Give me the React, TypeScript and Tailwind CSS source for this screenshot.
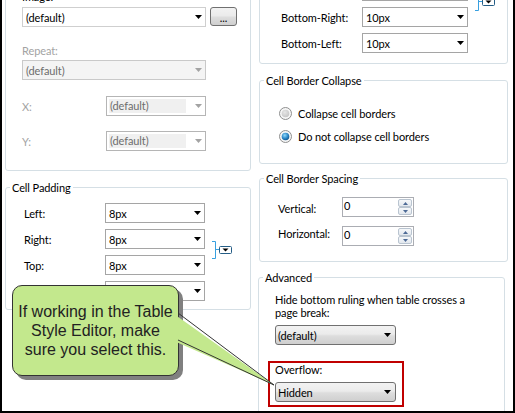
import React from 'react';

// table style editor panel with a callout pointing at the Overflow combo

function Arrow({ disabled }: { disabled?: boolean }) {
  return (
    <svg width="7" height="4" viewBox="0 0 7 4" className="shrink-0">
      <path d="M0 0h7L3.5 4z" fill={disabled ? '#a3a3a3' : '#000'} />
    </svg>
  );
}

function Combo({ value, className }: { value: string; className: string }) {
  return (
    <div className={`flex h-[20px] items-center justify-between border bg-white pl-[3px] pr-[3px] ${className}`}>
      <span>{value}</span>
      <Arrow />
    </div>
  );
}

function DisabledCombo({ value, filled }: { value: string; filled?: boolean }) {
  if (filled) {
    return (
      <div className="flex h-[20px] w-[184px] items-center justify-between border border-[#c9c9c9] bg-[#f4f4f4] pl-[3px] pr-[3px] text-[#6d6d6d]">
        <span>{value}</span>
        <Arrow disabled />
      </div>
    );
  }
  return (
    <div className="flex h-[20px] w-[100px] items-center gap-[9px] border border-[#b5b5b5] bg-white p-[2px] pr-[3px] text-[#6d6d6d]">
      <span className="h-full flex-1 bg-[#f0f0f0] pl-[1px] leading-[14px]">{value}</span>
      <Arrow disabled />
    </div>
  );
}

function ButtonCombo({ value }: { value: string }) {
  return (
    <div className="flex h-[20px] w-[121px] items-center justify-between rounded-[3px] border border-[#707070] bg-[linear-gradient(#f2f2f2,#ebebeb_45%,#dddddd_55%,#cfcfcf)] pl-[2px] pr-[4px]">
      <span>{value}</span>
      <Arrow />
    </div>
  );
}

function SpinButton({ up }: { up?: boolean }) {
  return (
    <div className="flex flex-1 items-center justify-center rounded-[2px] border border-[#b9c4d0] bg-linear-to-b from-[#f6f8fa] to-[#e3e8ee]">
      <svg width="5" height="3" viewBox="0 0 5 3">
        <path d={up ? 'M0 3h5L2.5 0z' : 'M0 0h5L2.5 3z'} fill="#4d6a96" />
      </svg>
    </div>
  );
}

function Spin({ value }: { value: string }) {
  return (
    <div className="flex h-[20px] w-[72px] border border-[#abadb3] bg-white">
      <span className="flex-1 pl-[1px]">{value}</span>
      <div className="my-px mr-px flex w-[14px] flex-col">
        <SpinButton up />
        <SpinButton />
      </div>
    </div>
  );
}

function Radio({ checked }: { checked?: boolean }) {
  const id = checked ? 'radio-on' : 'radio-off';
  return (
    <svg width="13" height="13" viewBox="0 0 13 13" className="shrink-0">
      <defs>
        <radialGradient id={id} cx="0.4" cy="0.35" r="0.7">
          {checked ? (
            <>
              <stop offset="0" stopColor="#8fd8fb" />
              <stop offset="0.6" stopColor="#2a86c6" />
              <stop offset="1" stopColor="#0d4f86" />
            </>
          ) : (
            <>
              <stop offset="0" stopColor="#e6e6e6" />
              <stop offset="1" stopColor="#c4c4c4" />
            </>
          )}
        </radialGradient>
      </defs>
      <circle cx="6.5" cy="6.5" r="6" fill="#f6f6f6" stroke="#8e8f8f" />
      <circle cx="6.5" cy="6.5" r="3.8" fill={`url(#${id})`} />
    </svg>
  );
}

function LinkIcon() {
  return (
    <svg width="21" height="20" viewBox="0 0 21 20" className="shrink-0">
      <path d="M0 1.5h3.5v17H0M3.5 9.5h4" stroke="#38a0e0" fill="none" />
      <rect x="7.5" y="6.5" width="12" height="7" rx="1" fill="#fff" stroke="#245d86" />
      <path d="M10.5 8.5h6l-3 3z" fill="#000" />
    </svg>
  );
}

function Legend({ children }: { children: React.ReactNode }) {
  return <legend className="ml-[4px] px-[2px]">{children}</legend>;
}

export default function App() {
  return (
    <div className="relative h-[413px] w-[515px] overflow-hidden border-x-2 border-b-2 border-black bg-white font-['Lato','Liberation_Sans',sans-serif] text-[11px] leading-[15px] tracking-[-0.1px] text-black">
      <div className="flex gap-[8px] pl-[3px] pr-[5px]">
        {/* left column */}
        <div className="flex w-[246px] flex-col">
          <div className="-mt-[12px] rounded-[3px] border border-[#d5dfe5] pb-[19px] pl-[16px]">
            <div>Image:</div>
            <div className="mt-[3px] flex items-start gap-[4px]">
              <Combo value="(default)" className="w-[184px] border-[#cfcfcf]" />
              <div className="flex h-[19px] w-[27px] items-center justify-center rounded-[3px] border border-[#707070] bg-[linear-gradient(#f2f2f2,#ebebeb_45%,#dddddd_55%,#cfcfcf)] pt-[2px] text-[11px] leading-[11px]">
                ...
              </div>
            </div>
            <div className="mt-[16px] text-[#a3a3a3]">Repeat:</div>
            <div className="mt-[2px]">
              <DisabledCombo value="(default)" filled />
            </div>
            <div className="mt-[16px] flex items-center">
              <span className="w-[84px] text-[#a3a3a3]">X:</span>
              <DisabledCombo value="(default)" />
            </div>
            <div className="mt-[15px] flex items-center">
              <span className="w-[84px] text-[#a3a3a3]">Y:</span>
              <DisabledCombo value="(default)" />
            </div>
          </div>

          <fieldset className="mt-[9px] rounded-[3px] border border-[#d5dfe5]">
            <Legend>Cell Padding</Legend>
            <div className="grid grid-cols-[81px_100px_auto] gap-y-[6px] pb-[8px] pl-[18px] pt-[8px]">
              <span className="self-center">Left:</span>
              <Combo value="8px" className="border-[#a5a5a5]" />
              <span />
              <span className="self-center">Right:</span>
              <Combo value="8px" className="border-[#a5a5a5]" />
              <div className="row-span-2 ml-[7px] mt-[11px] self-start">
                <LinkIcon />
              </div>
              <span className="self-center">Top:</span>
              <Combo value="8px" className="border-[#a5a5a5]" />
              <span className="self-center">Bottom:</span>
              <Combo value="8px" className="border-[#a5a5a5]" />
              <span />
            </div>
          </fieldset>
        </div>

        {/* right column */}
        <div className="flex w-[249px] flex-col">
          <div className="-mt-[56px] rounded-[3px] border border-[#d5dfe5] pb-[10px] pl-[21px] pt-[10px]">
            <div className="grid grid-cols-[81px_106px_auto] gap-y-[6px]">
              <span className="self-center">Top-Left:</span>
              <Combo value="10px" className="border-[#a5a5a5]" />
              <span />
              <span className="self-center">Top-Right:</span>
              <Combo value="10px" className="border-[#a5a5a5]" />
              <div className="row-span-2 ml-[7px] mt-[11px] self-start">
                <LinkIcon />
              </div>
              <span className="self-center">Bottom-Right:</span>
              <Combo value="10px" className="border-[#a5a5a5]" />
              <span className="self-center">Bottom-Left:</span>
              <Combo value="10px" className="border-[#a5a5a5]" />
              <span />
            </div>
          </div>

          <fieldset className="mt-[9px] rounded-[3px] border border-[#d5dfe5]">
            <Legend>Cell Border Collapse</Legend>
            <div className="flex flex-col gap-[8px] pb-[19px] pl-[19px] pt-[18px]">
              <label className="flex items-center gap-[6px]">
                <Radio />
                <span>Collapse cell borders</span>
              </label>
              <label className="flex items-center gap-[6px]">
                <Radio checked />
                <span>Do not collapse cell borders</span>
              </label>
            </div>
          </fieldset>

          <fieldset className="mt-[7px] rounded-[3px] border border-[#d5dfe5]">
            <Legend>Cell Border Spacing</Legend>
            <div className="grid grid-cols-[64px_72px] items-start gap-y-[9px] pb-[15px] pl-[18px] pt-[11px]">
              <span className="pt-[4px]">Vertical:</span>
              <Spin value="0" />
              <span>Horizontal:</span>
              <Spin value="0" />
            </div>
          </fieldset>

          <fieldset className="-ml-px mt-[8px] w-[247px] rounded-[3px] border border-[#d5dfe5]">
            <Legend>Advanced</Legend>
            <div className="flex flex-col items-start pb-[20px] pl-[16px] pt-[8px]">
              <p className="whitespace-nowrap leading-[13px]">
                Hide bottom ruling when table crosses a
                <br />
                page break:
              </p>
              <div className="mt-[6px]">
                <ButtonCombo value="(default)" />
              </div>
              <div className="-ml-[7px] mt-[16px] w-[136px] border-2 border-[#c00000] pb-[3px] pl-[5px]">
                <div className="leading-[13px]">Overflow:</div>
                <div className="mt-[6px]">
                  <ButtonCombo value="Hidden" />
                </div>
              </div>
            </div>
          </fieldset>
        </div>
      </div>

      {/* callout */}
      <div className="absolute left-[10px] top-[285px] flex h-[91px] w-[167px] items-center justify-center rounded-[10px] border border-[#333333] bg-[#c3e88d] text-center font-['Liberation_Sans',Arial,sans-serif] text-[16px] leading-[19px] tracking-normal text-[#222222] shadow-[4px_4px_0_0_#808080]">
        <p>
          If working in the Table
          <br />
          Style Editor, make
          <br />
          sure you select this.
        </p>
      </div>
      <svg className="pointer-events-none absolute left-0 top-0" width="513" height="411">
        <polygon points="172,314 272,385 172,341" fill="#c3e88d" />
        <polyline points="176,313 272,385 176,340" fill="none" stroke="#333333" />
      </svg>
    </div>
  );
}
